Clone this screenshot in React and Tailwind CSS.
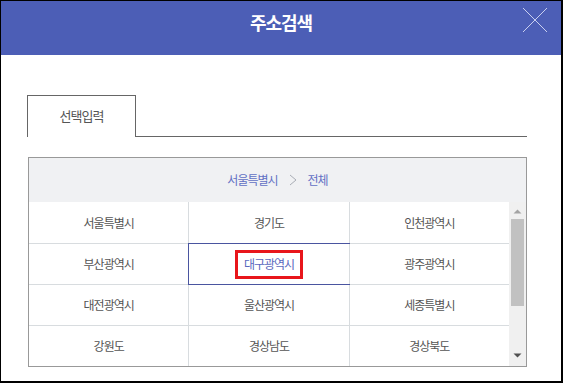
import React from 'react';

const ROWS = [
  ['서울특별시', '경기도', '인천광역시'],
  ['부산광역시', '대구광역시', '광주광역시'],
  ['대전광역시', '울산광역시', '세종특별시'],
  ['강원도', '경상남도', '경상북도'],
];

const SELECTED = '대구광역시';

function Cell({ name, first }) {
  const isSelected = name === SELECTED;
  return (
    <div className={`relative flex-1 flex items-center justify-center ${first ? '' : 'border-l border-[#d8dcdf]'}`}>
      {isSelected ? (
        <>
          <div className="absolute -left-px -top-px -right-px -bottom-px border border-[#4a55a0]" />
          <span className="border-[3px] border-[#e8161b] px-[6px] h-[29px] flex items-center text-[#5a68be]">{name}</span>
        </>
      ) : (
        <span>{name}</span>
      )}
    </div>
  );
}

export default function App() {
  return (
    <div
      className="w-[563px] h-[383px] bg-white border-l border-t border-r-2 border-b-2 border-black overflow-hidden"
      style={{ fontFamily: '"Noto Sans CJK KR", "Noto Sans", sans-serif' }}
    >
      {/* header */}
      <div className="relative h-[54px] bg-[#4c5eb6] flex justify-center pt-[8px]">
        <h1 className="text-white text-[18px] font-bold tracking-[-1px] leading-[26px]">주소검색</h1>
        <svg className="absolute right-[13px] top-[6px]" width="26" height="26" viewBox="0 0 26 26">
          <path d="M1 1 L25 25 M25 1 L1 25" stroke="#c9cff0" strokeWidth="1" fill="none" />
        </svg>
      </div>

      <div className="pl-[26px] pr-[34px] pt-[40px]">
        {/* tab */}
        <div className="flex">
          <div className="w-[109px] h-[42px] border border-b-0 border-[#666] flex items-center justify-center text-[13px] tracking-[-1px] text-[#555] leading-none pb-[2px]">
            선택입력
          </div>
          <div className="flex-1 h-[42px] border-b border-[#666]" />
        </div>

        {/* address box */}
        <div className="ml-px mt-[20px] border border-[#999] text-[12px] tracking-[-1px] text-[#555] leading-none">
          <div className="h-[44px] bg-[#f0f1f3] flex items-center justify-center pb-[1px] text-[#6270c4]">
            <span>서울특별시</span>
            <svg className="mx-[11px]" width="8" height="12" viewBox="0 0 8 12">
              <path d="M1 1 L7 6 L1 11" stroke="#a9adb5" strokeWidth="1" fill="none" />
            </svg>
            <span>전체</span>
          </div>
          <div className="flex">
            <div className="flex-1">
              {ROWS.map((row, i) => (
                <div key={i} className={`flex h-[41px] ${i === 0 ? '' : 'border-t border-[#d8dcdf]'}`}>
                  {row.map((name, j) => (
                    <Cell key={name} name={name} first={j === 0} />
                  ))}
                </div>
              ))}
            </div>
            {/* scrollbar */}
            <div className="w-[17px] bg-[#f0f0f0] flex flex-col items-center">
              <svg className="mt-[7px]" width="9" height="5" viewBox="0 0 9 5">
                <path d="M0.5 4.5 L4.5 0.5 L8.5 4.5 Z" fill="#a3a3a3" />
              </svg>
              <div className="mt-[5px] w-[13px] h-[87px] bg-[#c1c1c1]" />
              <div className="flex-1" />
              <svg className="mb-[8px]" width="9" height="5" viewBox="0 0 9 5">
                <path d="M0.5 0.5 L8.5 0.5 L4.5 4.5 Z" fill="#505050" />
              </svg>
            </div>
          </div>
        </div>
      </div>
    </div>
  );
}
